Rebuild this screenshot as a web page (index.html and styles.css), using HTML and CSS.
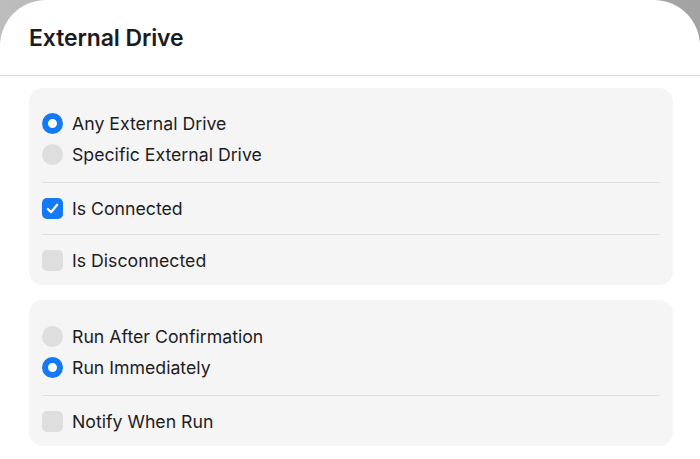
FILE: index.html
```html
<!DOCTYPE html>
<html lang="en">
<head>
    <meta charset="UTF-8">
    <meta name="viewport" content="width=device-width, initial-scale=1.0">
    <title>External Drive</title>
    <link rel="stylesheet" href="styles.css">
</head>
<body>
    <div class="window">
        <header class="sheet-header">
            <h1>External Drive</h1>
        </header>

        <main class="content">
            <div class="card">
                <div class="section first">
                    <label class="row"><span class="radio on"></span>Any External Drive</label>
                    <label class="row"><span class="radio"></span>Specific External Drive</label>
                </div>
                <div class="section">
                    <label class="row">
                        <span class="check on">
                            <svg viewBox="0 0 20 20" width="17" height="17"><path d="M4.5 10.5 L8.3 14.4 L15.5 5.6" fill="none" stroke="#fff" stroke-width="2.6" stroke-linecap="round" stroke-linejoin="round"/></svg>
                        </span>Is Connected
                    </label>
                </div>
                <div class="section last">
                    <label class="row"><span class="check"></span>Is Disconnected</label>
                </div>
            </div>

            <div class="card">
                <div class="section first roomy">
                    <label class="row"><span class="radio"></span>Run After Confirmation</label>
                    <label class="row"><span class="radio on"></span>Run Immediately</label>
                </div>
                <div class="section last">
                    <label class="row"><span class="check"></span>Notify When Run</label>
                </div>
            </div>
        </main>
    </div>
</body>
</html>
```

FILE: styles.css
```css
html, body {
    margin: 0;
    height: 100%;
}
body {
    font-family: Inter, "Noto Sans", sans-serif;
    background: linear-gradient(90deg, #bdbdbd, #a3a3a3);
    color: #1d1d1f;
    overflow: hidden;
}
.window {
    background: #fff;
    height: 100%;
    border-radius: 46px 46px 0 0;
}
.sheet-header {
    height: 76px;
    box-sizing: border-box;
    padding: 24px 29px 0;
    border-bottom: 1px solid #dcdcdc;
}
h1 {
    margin: 0;
    font-size: 23px;
    font-weight: 600;
    letter-spacing: -0.1px;
    color: #1c1c1e;
}
.content {
    display: flex;
    flex-direction: column;
    gap: 15px;
    padding: 12px 27px 0 29px;
}
.card {
    background: #f5f5f5;
    border-radius: 14px;
    padding: 0 13px;
}
.section {
    padding: 10px 0;
    border-top: 1px solid #e0e0e0;
}
.section.first {
    padding-top: 20px;
    padding-bottom: 12px;
    border-top: none;
}
.section.first.roomy {
    padding-top: 21px;
}
.section.last {
    padding-bottom: 9px;
}
.row {
    display: flex;
    align-items: center;
    gap: 9px;
    height: 31px;
    font-size: 17.7px;
    color: #1d1d1f;
}
.radio {
    width: 21px;
    height: 21px;
    border-radius: 50%;
    background: #dedede;
    box-sizing: border-box;
    flex: none;
}
.radio.on {
    background: #fff;
    border: 6.5px solid #1479f6;
}
.check {
    width: 21px;
    height: 21px;
    border-radius: 5px;
    background: #dedede;
    flex: none;
    display: flex;
    align-items: center;
    justify-content: center;
}
.check.on {
    background: #1479f6;
}
```
